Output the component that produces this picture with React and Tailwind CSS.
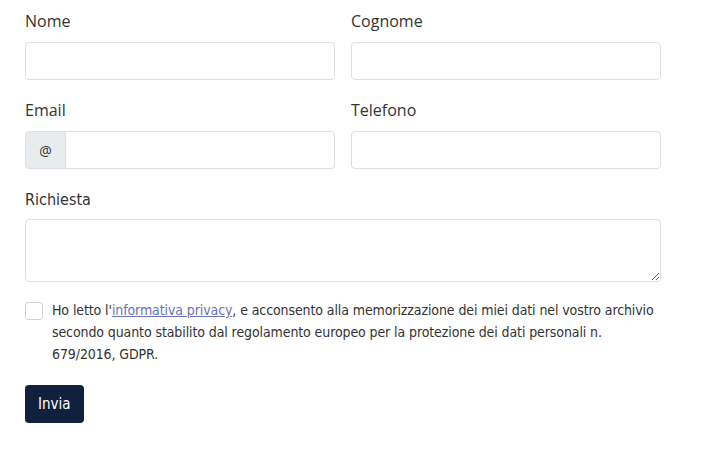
import { useState } from "react";

const label = "block text-[16px] text-[#333] mb-[9px] leading-6 font-['Open_Sans',sans-serif]";
const condensed = "font-['DejaVu_Sans_Condensed','DejaVu_Sans',sans-serif]";
const inputCls =
  "w-full h-[38px] rounded-[4px] border border-[#dcdfe3] bg-white px-3 text-[15px] text-[#333] outline-none";

export default function App() {
  const [accepted, setAccepted] = useState(false);

  return (
    <div className="min-h-[460px] bg-white">
      <form className="w-[636px] ml-[25px] pt-[9px]">
        {/* nome / cognome */}
        <div className="grid grid-cols-2 gap-4 mb-[18px]">
          <div>
            <label className={label}>Nome</label>
            <input className={inputCls} />
          </div>
          <div>
            <label className={label}>Cognome</label>
            <input className={inputCls} />
          </div>
        </div>

        {/* email / telefono */}
        <div className="grid grid-cols-2 gap-4 mb-[19px]">
          <div>
            <label className={label}>Email</label>
            <div className="flex h-[38px]">
              <span className="flex items-center justify-center w-[41px] bg-[#e9ecef] border border-[#dcdfe3] rounded-l-[4px] text-[14px] text-[#333] font-['Open_Sans',sans-serif]">
                @
              </span>
              <input className="flex-1 min-w-0 h-[38px] border border-l-0 border-[#dcdfe3] rounded-r-[4px] px-3 outline-none" />
            </div>
          </div>
          <div>
            <label className={label}>Telefono</label>
            <input className={inputCls} />
          </div>
        </div>

        {/* richiesta */}
        <div className="mb-[17px]">
          <label className={`block text-[16px] text-[#333] mb-[7px] leading-6 ${condensed}`}>Richiesta</label>
          <textarea className="block w-full h-[63px] rounded-[4px] border border-[#dcdfe3] px-3 py-2 outline-none" />
        </div>

        {/* privacy */}
        <div className={`flex gap-[9px] text-[14px] leading-[22px] text-[#333] ${condensed}`}>
          <input
            type="checkbox"
            checked={accepted}
            onChange={() => setAccepted(!accepted)}
            className="appearance-none shrink-0 mt-[3px] w-[18px] h-[18px] rounded-[3px] border border-[#cfd3d8] bg-white"
          />
          <p className="tracking-[-0.1px]">
            Ho letto l'
            <a href="#" className="text-[#6b70b8] underline">
              informativa privacy
            </a>
            , e acconsento alla memorizzazione dei miei dati nel vostro archivio secondo quanto stabilito dal
            regolamento europeo per la protezione dei dati personali n. 679/2016, GDPR.
          </p>
        </div>

        <button
          type="button"
          className={`mt-[20px] h-[38px] px-[13px] rounded-[4px] bg-[#10203f] text-white text-[15px] ${condensed}`}
        >
          Invia
        </button>
      </form>
    </div>
  );
}
